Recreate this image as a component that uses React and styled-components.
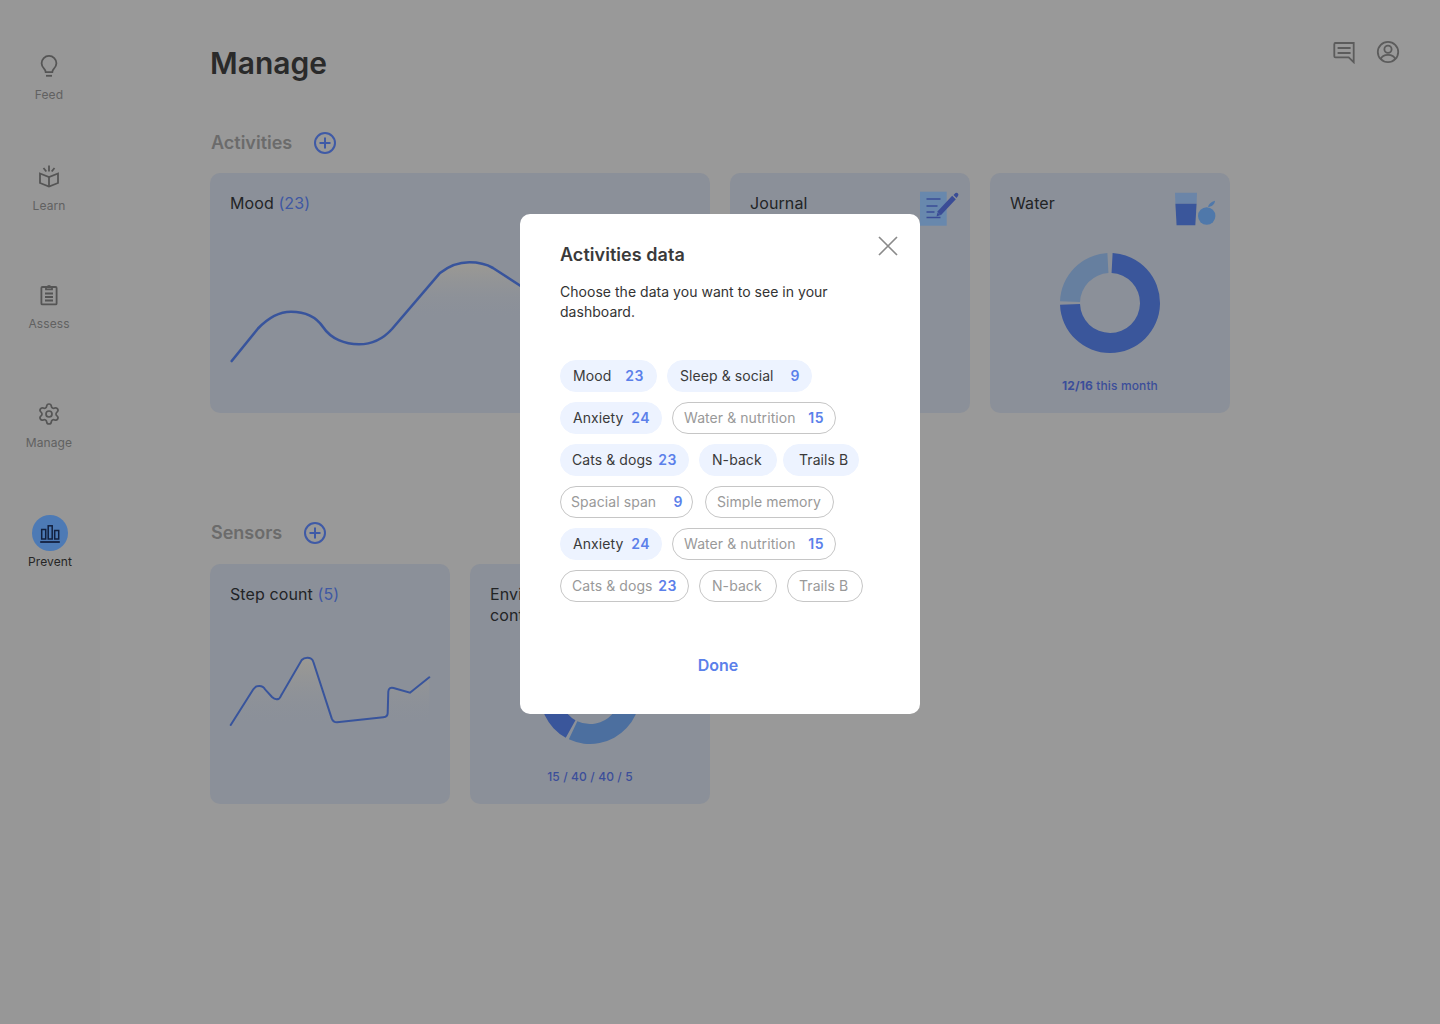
import React from "react";
import styled, { createGlobalStyle } from "styled-components";
import { Settings } from "lucide-react";

const Global = createGlobalStyle`
  html, body { margin: 0; padding: 0; background: #999999; }
  * { box-sizing: border-box; }
  body { font-family: Inter, "Liberation Sans", sans-serif; }
`;

const Page = styled.div`
  display: flex;
  min-height: 1024px;
  width: 1440px;
  background: #999999;
  overflow: hidden;
  position: relative;
`;

const Sidebar = styled.nav`
  width: 100px;
  flex: none;
  background: #979797;
  padding-top: 54px;
  display: flex;
  flex-direction: column;
`;

const NavItem = styled.div`
  display: flex;
  flex-direction: column;
  align-items: center;
  width: 98px;
  height: ${(p) => p.$h}px;
  gap: ${(p) => p.$gap}px;
  font-size: 12px;
  line-height: 16px;
  letter-spacing: 0.1px;
  color: ${(p) => (p.$active ? "#262626" : "#616161")};
  & > svg { flex: none; color: #555555; }
`;

const ActiveDot = styled.span`
  width: 36px;
  height: 36px;
  border-radius: 50%;
  background: #4d7ab5;
  margin-left: 2px;
  display: flex;
  align-items: center;
  justify-content: center;
`;

const ActiveLabel = styled.span`
  margin-left: 2px;
`;

const Main = styled.main`
  flex: 1;
  padding: 0 40px 0 110px;
`;

const Header = styled.header`
  display: flex;
  justify-content: space-between;
  align-items: flex-start;
  height: 88px;
  padding-top: 43px;
`;

const Title = styled.h1`
  margin: 0;
  font-size: 30px;
  line-height: 40px;
  font-weight: 600;
  color: #2a2a2a;
`;

const TopIcons = styled.div`
  display: flex;
  gap: 20px;
  margin-top: -3px;
  color: #5c5c5c;
`;

const SectionHead = styled.div`
  display: flex;
  align-items: center;
  gap: 21px;
  height: 30px;
  margin-top: ${(p) => p.$mt}px;
  margin-bottom: ${(p) => p.$mb}px;
  padding-left: 1px;
`;

const SectionTitle = styled.h2`
  margin: 0;
  font-size: 18px;
  line-height: 30px;
  font-weight: 600;
  color: #6b6b6b;
`;

const CardRow = styled.div`
  display: flex;
  gap: 20px;
`;

const Card = styled.section`
  position: relative;
  width: ${(p) => p.$w}px;
  height: 240px;
  border-radius: 10px;
  background: #8b9099;
  padding: 20px;
`;

const CardTitle = styled.div`
  font-size: 16px;
  line-height: 21px;
  letter-spacing: 0.1px;
  color: #222426;
  max-width: ${(p) => p.$max || "none"};
`;

const Count = styled.span`
  color: #3f58a3;
`;

const CornerIcon = styled.svg`
  position: absolute;
  top: 17px;
  left: ${(p) => p.$left}px;
`;

const ChartArt = styled.svg`
  position: absolute;
  top: 0;
  left: 0;
`;

const Caption = styled.div`
  position: absolute;
  left: 0;
  right: 0;
  top: ${(p) => p.$top}px;
  text-align: center;
  font-size: 12px;
  line-height: 16px;
  font-weight: 500;
  letter-spacing: 0.12px;
  color: #3b4e9a;
  & b { font-weight: 700; }
`;

const Modal = styled.div`
  position: absolute;
  left: 520px;
  top: 214px;
  width: 400px;
  height: 500px;
  border-radius: 10px;
  background: #ffffff;
  padding: 29px 40px 0;
`;

const CloseBtn = styled.button`
  position: absolute;
  top: 22px;
  right: 22px;
  width: 20px;
  height: 20px;
  padding: 0;
  border: 0;
  background: none;
  color: #8a8a8a;
  display: block;
`;

const ModalTitle = styled.h3`
  margin: 0;
  font-size: 18px;
  line-height: 24px;
  font-weight: 600;
  letter-spacing: 0.05px;
  color: #3a3a3a;
`;

const ModalText = styled.p`
  margin: 15px 0 38px;
  font-size: 14px;
  line-height: 20px;
  letter-spacing: 0.03px;
  color: #333333;
  width: 290px;
`;

const Chips = styled.div`
  display: flex;
  flex-direction: column;
  gap: 10px;
`;

const ChipRow = styled.div`
  display: flex;
  gap: 10px;
`;

const Chip = styled.div`
  width: ${(p) => p.$w}px;
  height: 32px;
  flex: none;
  border-radius: 16px;
  margin-left: ${(p) => p.$ml || 0}px;
  padding: 0 ${(p) => p.$r}px 2px ${(p) => p.$l}px;
  display: flex;
  align-items: center;
  justify-content: space-between;
  font-size: 14px;
  letter-spacing: 0.07px;
  white-space: nowrap;
  background: ${(p) => (p.$on ? "#edf3ff" : "#ffffff")};
  border: 1px solid ${(p) => (p.$on ? "#edf3ff" : "#c6c6c6")};
  color: ${(p) => (p.$on ? "#3a3a3a" : "#999999")};
`;

const ChipCount = styled.span`
  font-weight: 600;
  letter-spacing: 0.5px;
  color: #5b80ea;
`;

const DoneBtn = styled.button`
  display: block;
  margin: 51px auto 0;
  border: 0;
  background: none;
  padding: 0;
  font: 600 16px/24px Inter, "Liberation Sans", sans-serif;
  color: #5b80ea;
  position: relative;
  left: -2px;
`;

const polar = (cx, cy, r, a) => {
  const t = ((a - 90) * Math.PI) / 180;
  return [cx + r * Math.cos(t), cy + r * Math.sin(t)];
};
const arc = (cx, cy, r0, r1, a, b) => {
  const [x0, y0] = polar(cx, cy, r1, a);
  const [x1, y1] = polar(cx, cy, r1, b);
  const [x2, y2] = polar(cx, cy, r0, b);
  const [x3, y3] = polar(cx, cy, r0, a);
  const lg = b - a > 180 ? 1 : 0;
  return `M${x0} ${y0}A${r1} ${r1} 0 ${lg} 1 ${x1} ${y1}L${x2} ${y2}A${r0} ${r0} 0 ${lg} 0 ${x3} ${y3}Z`;
};

const BulbIcon = () => (
  <svg width="24" height="24" viewBox="0 0 24 24" fill="none" stroke="currentColor" strokeWidth="1.8">
    <path d="M12 1.900a7.400 7.400 0 0 0-7.400 7.400c0 2.400 1.100 4.100 2.600 5.600.9.900 1.400 2 1.500 3.300h6.600c.1-1.300.6-2.400 1.500-3.300 1.500-1.500 2.600-3.200 2.600-5.600A7.400 7.400 0 0 0 12 1.900z" />
    <path d="M9 21.800h6" />
  </svg>
);
const BookIcon = () => (
  <svg width="24" height="24" viewBox="0 0 24 24" fill="none" stroke="currentColor" strokeWidth="1.800">
    <path d="M3 8.500l9 3.500 9-3.500V18l-9 3.500L3 18z" />
    <path d="M12 12v9.500M12 0.500v6M6.500 3l2.800 3.500M17.500 3l-2.800 3.500" />
  </svg>
);
const ClipIcon = () => (
  <svg width="24" height="24" viewBox="0 0 24 24" fill="none" stroke="currentColor" strokeWidth="1.800">
    <rect x="4.400" y="4" width="15.200" height="17.400" rx="1" />
    <path d="M9 6.300V4h1.400a1.700 1.700 0 0 1 3.200 0H15v2.300zM8 10.500h8M8 14h8M8 17.500h8" />
  </svg>
);
const BarsIcon = () => (
  <svg width="22" height="22" viewBox="0 0 22 22" fill="none" stroke="#12203f" strokeWidth="1.500">
    <rect x="2.700" y="7.500" width="4" height="9.500" />
    <rect x="9.200" y="3.800" width="4" height="13.200" />
    <rect x="15.700" y="8.500" width="4" height="8.500" />
    <path d="M1.200 20h19.600" strokeWidth="1.800" />
  </svg>
);
const CommentIcon = () => (
  <svg width="24" height="24" viewBox="0 0 24 24" fill="none" stroke="currentColor" strokeWidth="1.800">
    <path d="M2.500 3h19.200v19.200l-5-4.800H3.500a1.200 1.200 0 0 1-1.200-1.200V4.200A1.200 1.200 0 0 1 3.500 3z" />
    <path d="M5.600 8h13M5.600 13h13" />
  </svg>
);
const UserIcon = () => (
  <svg width="24" height="24" viewBox="0 0 24 24" fill="none" stroke="currentColor" strokeWidth="1.800">
    <circle cx="12" cy="12" r="10.200" />
    <circle cx="12" cy="9.200" r="3.600" />
    <path d="M4.800 19c1-3 4-4.200 7.200-4.200s6.200 1.200 7.200 4.200" />
  </svg>
);
const PlusIcon = () => (
  <svg width="24" height="24" viewBox="0 0 24 24" fill="none" stroke="#3f5aa6" strokeWidth="2">
    <circle cx="12" cy="12" r="10" />
    <path d="M12 6.500v11M6.500 12h11" />
  </svg>
);

const moodLine = "M21.700 188 L48 155.500 C58 145 70 138.700 81 138.700 C96 138.700 107 145 113 154 C121 166 135 171.300 149 171.300 C162 171.300 173 166 182 156 L230 100 C239 93 249 89.300 259.300 89.300 C268 89.300 276 91 283 95 L340 132 C380 155 420 160 480 120";
const stepLine = "M20.700 161 L43.300 125.300 C46 122 47 122 49.300 122 C52 122 54 123.300 55 125.300 L62 133 C64 135 67 135.500 69 134.700 C70.500 134 71 131 72 130 L91.700 96 C93.500 94 95 93.700 97.300 93.700 C100 93.700 102.500 95 103.300 97.700 L121.700 154.300 C122.700 157 124 158.300 127 158.300 L173.300 153.300 C176 153 177.700 151 177.700 149 L178.300 127.700 C178.500 124 181 123.300 183.500 124 L200 128.700 L219.300 113.300";

const chipRows = [
  [
    { t: "Mood", n: "23", w: 97, l: 12, r: 12, on: 1 },
    { t: "Sleep & social", n: "9", w: 145, l: 12, r: 11, on: 1 },
  ],
  [
    { t: "Anxiety", n: "24", w: 102, l: 12, r: 11, on: 1 },
    { t: "Water & nutrition", n: "15", w: 164, l: 11, r: 11 },
  ],
  [
    { t: "Cats & dogs", n: "23", w: 129, l: 11, r: 11, on: 1 },
    { t: "N-back", w: 78, l: 12, r: 0, on: 1 },
    { t: "Trails B", w: 76, l: 15, r: 0, on: 1, ml: -4 },
  ],
  [
    { t: "Spacial span", n: "9", w: 133, l: 10, r: 9 },
    { t: "Simple memory", w: 129, l: 11, r: 0, ml: 2 },
  ],
  [
    { t: "Anxiety", n: "24", w: 102, l: 12, r: 11, on: 1 },
    { t: "Water & nutrition", n: "15", w: 164, l: 11, r: 11 },
  ],
  [
    { t: "Cats & dogs", n: "23", w: 129, l: 11, r: 11 },
    { t: "N-back", w: 78, l: 12, r: 0 },
    { t: "Trails B", w: 76, l: 11, r: 0 },
  ],
];

export default function App() {
  return (
    <Page>
      <Global />
      <Sidebar>
        <NavItem $h={111} $gap={9}><BulbIcon /><span>Feed</span></NavItem>
        <NavItem $h={118} $gap={9}><BookIcon /><span>Learn</span></NavItem>
        <NavItem $h={119} $gap={9}><ClipIcon /><span>Assess</span></NavItem>
        <NavItem $h={113} $gap={9}><Settings size={24} strokeWidth={1.7} /><span>Manage</span></NavItem>
        <NavItem $h={60} $gap={3} $active>
          <ActiveDot><BarsIcon /></ActiveDot>
          <ActiveLabel>Prevent</ActiveLabel>
        </NavItem>
      </Sidebar>
      <Main>
        <Header>
          <Title>Manage</Title>
          <TopIcons><CommentIcon /><UserIcon /></TopIcons>
        </Header>
        <SectionHead $mt={40} $mb={15}>
          <SectionTitle>Activities</SectionTitle>
          <PlusIcon />
        </SectionHead>
        <CardRow>
          <Card $w={500}>
            <CardTitle>Mood <Count>(23)</Count></CardTitle>
            <ChartArt width="500" height="240" viewBox="0 0 500 240" fill="none">
              <defs>
                <linearGradient id="moodFill" x1="0" y1="0" x2="0" y2="1">
                  <stop offset="0" stopColor="#a09c92" stopOpacity="0.8" />
                  <stop offset="0.55" stopColor="#8b9099" stopOpacity="0" />
                </linearGradient>
              </defs>
              <path d={`${moodLine} V190 H21.700 Z`} fill="url(#moodFill)" />
              <path d={moodLine} stroke="#38549c" strokeWidth="2.600" strokeLinecap="round" />
            </ChartArt>
          </Card>
          <Card $w={240}>
            <CardTitle>Journal</CardTitle>
            <CornerIcon $left={189} width="40" height="38" viewBox="0 0 40 38" fill="none">
              <rect x="1" y="1.700" width="26.700" height="34" fill="#6888ad" />
              <path d="M7.500 9h14M7.500 16h11M7.500 22h8M7.500 27.500h14" stroke="#3a4c96" strokeWidth="1.300" />
              <path d="M20 23.500 35 7.500" stroke="#3a4c96" strokeWidth="5" />
              <path d="M34.500 5 36.500 3a2 2 0 0 1 2.500 3l-1.500 2z" fill="#3a4c96" />
              <path d="M17.500 26.500l1-4 3 2.500z" fill="#3a4c96" />
            </CornerIcon>
          </Card>
          <Card $w={240}>
            <CardTitle>Water</CardTitle>
            <CornerIcon $left={184} width="44" height="38" viewBox="0 0 44 38" fill="none">
              <path d="M1 2.700h22l-.4 11H1.400z" fill="#6b85a8" />
              <path d="M1.400 13.700h21.200l-1.300 21.600H2.600z" fill="#3a569b" />
              <circle cx="32.700" cy="26" r="8.700" fill="#4f78aa" />
              <path d="M34 17c.5-3 3-5.200 7-6.300-.2 3-2.500 5.800-7 6.300z" fill="#4f78aa" />
            </CornerIcon>
            <ChartArt width="240" height="240" viewBox="0 0 240 240">
              <path d={arc(120, 130, 30, 50, 3, 268)} fill="#3a569b" />
              <path d={arc(120, 130, 30, 50, 272, 357)} fill="#667f9f" />
            </ChartArt>
            <Caption $top={205}><b>12/16</b> this month</Caption>
          </Card>
        </CardRow>
        <SectionHead $mt={105} $mb={16}>
          <SectionTitle>Sensors</SectionTitle>
          <PlusIcon />
        </SectionHead>
        <CardRow>
          <Card $w={240}>
            <CardTitle>Step count <Count>(5)</Count></CardTitle>
            <ChartArt width="240" height="240" viewBox="0 0 240 240" fill="none">
              <defs>
                <linearGradient id="stepFill" x1="0" y1="0" x2="0" y2="1">
                  <stop offset="0" stopColor="#a09c92" stopOpacity="0.8" />
                  <stop offset="1" stopColor="#8b9099" stopOpacity="0" />
                </linearGradient>
              </defs>
              <path d={`${stepLine} V161 H20.700 Z`} fill="url(#stepFill)" />
              <path d={stepLine} stroke="#38549c" strokeWidth="2" strokeLinecap="round" />
            </ChartArt>
          </Card>
          <Card $w={240}>
            <CardTitle $max="120px">Environment control</CardTitle>
            <ChartArt width="240" height="240" viewBox="0 0 240 240">
              <path d={arc(120, 130, 30, 50, 2, 58)} fill="#667f9f" />
              <path d={arc(120, 130, 30, 50, 61, 205)} fill="#4c6f9f" />
              <path d={arc(120, 130, 30, 50, 209, 352)} fill="#3a569b" />
              <path d={arc(120, 130, 30, 50, 354, 359)} fill="#667f9f" />
            </ChartArt>
            <Caption $top={205}>15 / 40 / 40 / 5</Caption>
          </Card>
        </CardRow>
      </Main>
      <Modal>
        <CloseBtn aria-label="Close">
          <svg width="20" height="20" viewBox="0 0 20 20" fill="none" stroke="currentColor" strokeWidth="1.700">
            <path d="M1 1l18 18M19 1 1 19" />
          </svg>
        </CloseBtn>
        <ModalTitle>Activities data</ModalTitle>
        <ModalText>Choose the data you want to see in your dashboard.</ModalText>
        <Chips>
          {chipRows.map((row, i) => (
            <ChipRow key={i}>
              {row.map((c, j) => (
                <Chip key={j} $w={c.w} $l={c.l} $r={c.r} $on={!!c.on} $ml={c.ml}>
                  <span>{c.t}</span>
                  {c.n && <ChipCount>{c.n}</ChipCount>}
                </Chip>
              ))}
            </ChipRow>
          ))}
        </Chips>
        <DoneBtn>Done</DoneBtn>
      </Modal>
    </Page>
  );
}
